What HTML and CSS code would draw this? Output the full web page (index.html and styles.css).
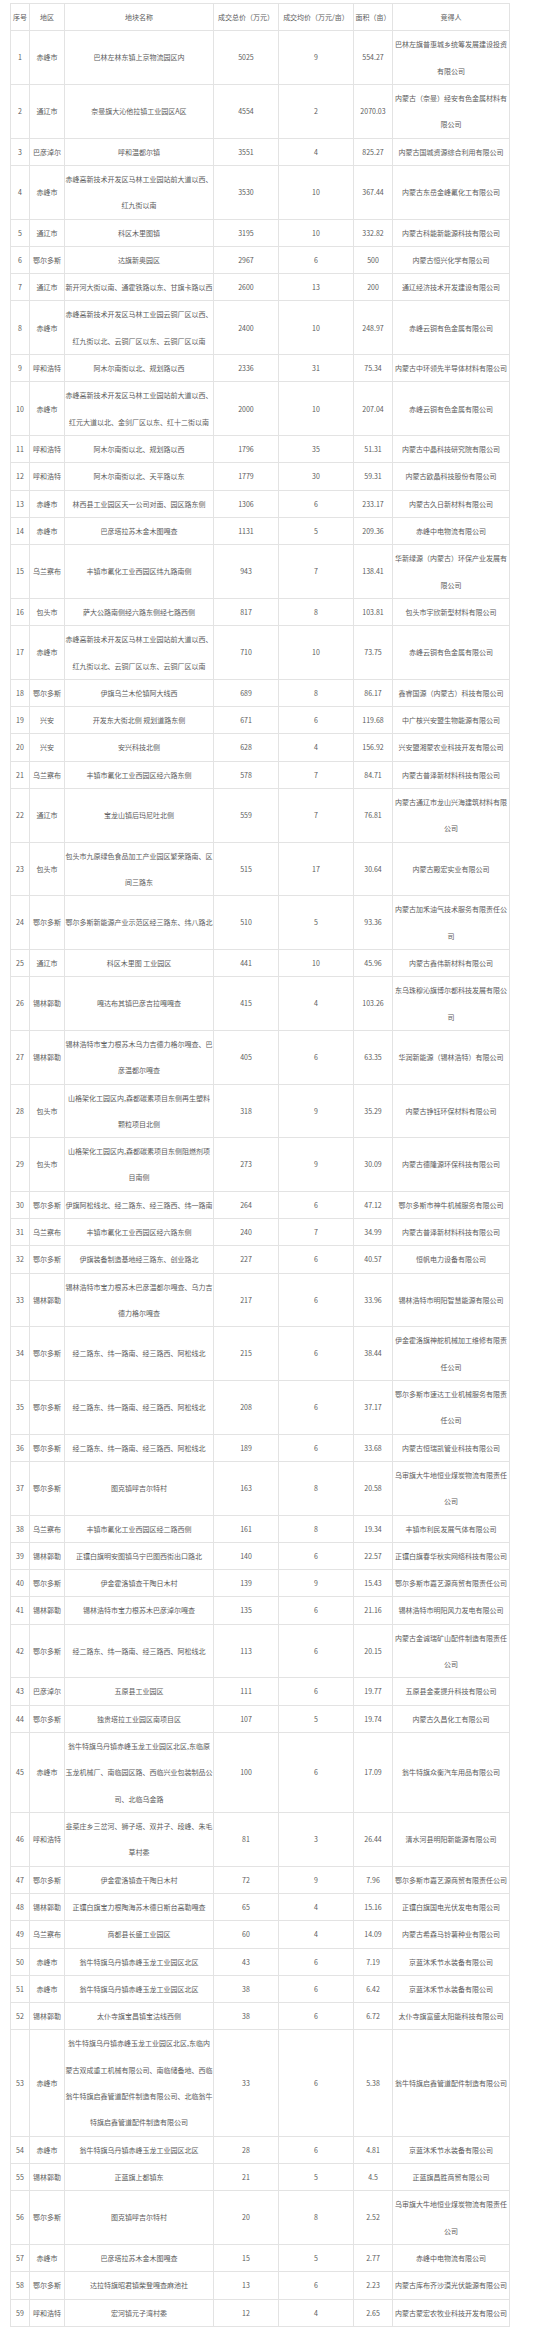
FILE: index.html
```html
<!DOCTYPE html>
<html lang="zh-CN">
<head>
<meta charset="utf-8">
<title>土地成交表</title>
<link rel="stylesheet" href="styles.css">
</head>
<body>
<div class="wrap">
<table class="land">
<colgroup>
<col class="c-no"><col class="c-area"><col class="c-name"><col class="c-total"><col class="c-avg"><col class="c-size"><col class="c-buyer">
</colgroup>
<thead>
<tr><th>序号</th><th>地区</th><th>地块名称</th><th>成交总价（万元）</th><th>成交均价（万元/亩）</th><th>面积（亩）</th><th>竞得人</th></tr>
</thead>
<tbody>
<tr><td>1</td><td>赤峰市</td><td>巴林左林东镇上京物流园区内</td><td>5025</td><td>9</td><td>554.27</td><td>巴林左旗普惠城乡统筹发展建设投资<br>有限公司</td></tr>
<tr><td>2</td><td>通辽市</td><td>奈曼旗大沁他拉镇工业园区A区</td><td>4554</td><td>2</td><td>2070.03</td><td>内蒙古（奈曼）经安有色金属材料有<br>限公司</td></tr>
<tr><td>3</td><td>巴彦淖尔</td><td>呼和温都尔镇</td><td>3551</td><td>4</td><td>825.27</td><td>内蒙古国城资源综合利用有限公司</td></tr>
<tr><td>4</td><td>赤峰市</td><td>赤峰高新技术开发区马林工业园站前大道以西、<br>红九街以南</td><td>3530</td><td>10</td><td>367.44</td><td>内蒙古东岳金峰氟化工有限公司</td></tr>
<tr><td>5</td><td>通辽市</td><td>科区木里图镇</td><td>3195</td><td>10</td><td>332.82</td><td>内蒙古科能新能源科技有限公司</td></tr>
<tr><td>6</td><td>鄂尔多斯</td><td>达旗新奥园区</td><td>2967</td><td>6</td><td>500</td><td>内蒙古恒兴化学有限公司</td></tr>
<tr><td>7</td><td>通辽市</td><td>新开河大街以南、通霍铁路以东、甘旗卡路以西</td><td>2600</td><td>13</td><td>200</td><td>通辽经济技术开发建设有限公司</td></tr>
<tr><td>8</td><td>赤峰市</td><td>赤峰高新技术开发区马林工业园云铜厂区以西、<br>红九街以北、云铜厂区以东、云铜厂区以南</td><td>2400</td><td>10</td><td>248.97</td><td>赤峰云铜有色金属有限公司</td></tr>
<tr><td>9</td><td>呼和浩特</td><td>阿木尔南街以北、规划路以西</td><td>2336</td><td>31</td><td>75.34</td><td>内蒙古中环领先半导体材料有限公司</td></tr>
<tr><td>10</td><td>赤峰市</td><td>赤峰高新技术开发区马林工业园站前大道以西、<br>红元大道以北、金剑厂区以东、红十二街以南</td><td>2000</td><td>10</td><td>207.04</td><td>赤峰云铜有色金属有限公司</td></tr>
<tr><td>11</td><td>呼和浩特</td><td>阿木尔南街以北、规划路以西</td><td>1796</td><td>35</td><td>51.31</td><td>内蒙古中晶科技研究院有限公司</td></tr>
<tr><td>12</td><td>呼和浩特</td><td>阿木尔南街以北、天平路以东</td><td>1779</td><td>30</td><td>59.31</td><td>内蒙古欧晶科技股份有限公司</td></tr>
<tr><td>13</td><td>赤峰市</td><td>林西县工业园区天一公司对面、园区路东侧</td><td>1306</td><td>6</td><td>233.17</td><td>内蒙古久日新材料有限公司</td></tr>
<tr><td>14</td><td>赤峰市</td><td>巴彦塔拉苏木金木图嘎查</td><td>1131</td><td>5</td><td>209.36</td><td>赤峰中电物流有限公司</td></tr>
<tr><td>15</td><td>乌兰察布</td><td>丰镇市氟化工业西园区纬九路南侧</td><td>943</td><td>7</td><td>138.41</td><td>华新绿源（内蒙古）环保产业发展有<br>限公司</td></tr>
<tr><td>16</td><td>包头市</td><td>萨大公路南侧经六路东侧经七路西侧</td><td>817</td><td>8</td><td>103.81</td><td>包头市宇欣新型材料有限公司</td></tr>
<tr><td>17</td><td>赤峰市</td><td>赤峰高新技术开发区马林工业园站前大道以西、<br>红九街以北、云铜厂区以东、云铜厂区以南</td><td>710</td><td>10</td><td>73.75</td><td>赤峰云铜有色金属有限公司</td></tr>
<tr><td>18</td><td>鄂尔多斯</td><td>伊旗乌兰木伦镇阿大线西</td><td>689</td><td>8</td><td>86.17</td><td>鑫睿国源（内蒙古）科技有限公司</td></tr>
<tr><td>19</td><td>兴安</td><td>开发东大街北侧 规划道路东侧</td><td>671</td><td>6</td><td>119.68</td><td>中广核兴安盟生物能源有限公司</td></tr>
<tr><td>20</td><td>兴安</td><td>安兴科技北侧</td><td>628</td><td>4</td><td>156.92</td><td>兴安盟湘蒙农业科技开发有限公司</td></tr>
<tr><td>21</td><td>乌兰察布</td><td>丰镇市氟化工业西园区经六路东侧</td><td>578</td><td>7</td><td>84.71</td><td>内蒙古普泽新材料科技有限公司</td></tr>
<tr><td>22</td><td>通辽市</td><td>宝龙山镇后玛尼吐北侧</td><td>559</td><td>7</td><td>76.81</td><td>内蒙古通辽市龙山兴海建筑材料有限<br>公司</td></tr>
<tr><td>23</td><td>包头市</td><td>包头市九原绿色食品加工产业园区繁荣路南、区<br>间三路东</td><td>515</td><td>17</td><td>30.64</td><td>内蒙古殿宏实业有限公司</td></tr>
<tr><td>24</td><td>鄂尔多斯</td><td>鄂尔多斯新能源产业示范区经三路东、纬八路北</td><td>510</td><td>5</td><td>93.36</td><td>内蒙古加禾油气技术服务有限责任公<br>司</td></tr>
<tr><td>25</td><td>通辽市</td><td>科区木里图 工业园区</td><td>441</td><td>10</td><td>45.96</td><td>内蒙古鑫伟新材料有限公司</td></tr>
<tr><td>26</td><td>锡林郭勒</td><td>嘎达布其镇巴彦吉拉嘎嘎查</td><td>415</td><td>4</td><td>103.26</td><td>东乌珠穆沁旗博尔都科技发展有限公<br>司</td></tr>
<tr><td>27</td><td>锡林郭勒</td><td>锡林浩特市宝力根苏木乌力吉德力格尔嘎查、巴<br>彦温都尔嘎查</td><td>405</td><td>6</td><td>63.35</td><td>华润新能源（锡林浩特）有限公司</td></tr>
<tr><td>28</td><td>包头市</td><td>山格架化工园区内,森都碳素项目东侧再生塑料<br>颗粒项目北侧</td><td>318</td><td>9</td><td>35.29</td><td>内蒙古铮钰环保材料有限公司</td></tr>
<tr><td>29</td><td>包头市</td><td>山格架化工园区内,森都碳素项目东侧阻燃剂项<br>目南侧</td><td>273</td><td>9</td><td>30.09</td><td>内蒙古德隆源环保科技有限公司</td></tr>
<tr><td>30</td><td>鄂尔多斯</td><td>伊旗阿松线北、经二路东、经三路西、纬一路南</td><td>264</td><td>6</td><td>47.12</td><td>鄂尔多斯市神牛机械服务有限公司</td></tr>
<tr><td>31</td><td>乌兰察布</td><td>丰镇市氟化工业西园区经六路东侧</td><td>240</td><td>7</td><td>34.99</td><td>内蒙古普泽新材料科技有限公司</td></tr>
<tr><td>32</td><td>鄂尔多斯</td><td>伊旗装备制造基地经三路东、创业路北</td><td>227</td><td>6</td><td>40.57</td><td>恒帆电力设备有限公司</td></tr>
<tr><td>33</td><td>锡林郭勒</td><td>锡林浩特市宝力根苏木巴彦温都尔嘎查、乌力吉<br>德力格尔嘎查</td><td>217</td><td>6</td><td>33.96</td><td>锡林浩特市明阳智慧能源有限公司</td></tr>
<tr><td>34</td><td>鄂尔多斯</td><td>经二路东、纬一路南、经三路西、阿松线北</td><td>215</td><td>6</td><td>38.44</td><td>伊金霍洛旗神舵机械加工维修有限责<br>任公司</td></tr>
<tr><td>35</td><td>鄂尔多斯</td><td>经二路东、纬一路南、经三路西、阿松线北</td><td>208</td><td>6</td><td>37.17</td><td>鄂尔多斯市速达工业机械服务有限责<br>任公司</td></tr>
<tr><td>36</td><td>鄂尔多斯</td><td>经二路东、纬一路南、经三路西、阿松线北</td><td>189</td><td>6</td><td>33.68</td><td>内蒙古恒瑞凯管业科技有限公司</td></tr>
<tr><td>37</td><td>鄂尔多斯</td><td>图克镇呼吉尔特村</td><td>163</td><td>8</td><td>20.58</td><td>乌审旗大牛地恒业煤炭物流有限责任<br>公司</td></tr>
<tr><td>38</td><td>乌兰察布</td><td>丰镇市氟化工业西园区经二路西侧</td><td>161</td><td>8</td><td>19.34</td><td>丰镇市利民发展气体有限公司</td></tr>
<tr><td>39</td><td>锡林郭勒</td><td>正镶白旗明安图镇乌宁巴图西街出口路北</td><td>140</td><td>6</td><td>22.57</td><td>正镶白旗春华秋实网络科技有限公司</td></tr>
<tr><td>40</td><td>鄂尔多斯</td><td>伊金霍洛镇查干陶日木村</td><td>139</td><td>9</td><td>15.43</td><td>鄂尔多斯市嘉艺源商贸有限责任公司</td></tr>
<tr><td>41</td><td>锡林郭勒</td><td>锡林浩特市宝力根苏木巴彦淖尔嘎查</td><td>135</td><td>6</td><td>21.16</td><td>锡林浩特市明阳风力发电有限公司</td></tr>
<tr><td>42</td><td>鄂尔多斯</td><td>经二路东、纬一路南、经三路西、阿松线北</td><td>113</td><td>6</td><td>20.15</td><td>内蒙古金诚瑞矿山配件制造有限责任<br>公司</td></tr>
<tr><td>43</td><td>巴彦淖尔</td><td>五原县工业园区</td><td>111</td><td>6</td><td>19.77</td><td>五原县金麦提升科技有限公司</td></tr>
<tr><td>44</td><td>鄂尔多斯</td><td>独贵塔拉工业园区南项目区</td><td>107</td><td>5</td><td>19.74</td><td>内蒙古久昌化工有限公司</td></tr>
<tr><td>45</td><td>赤峰市</td><td>翁牛特旗乌丹镇赤峰玉龙工业园区北区,东临原<br>玉龙机械厂、南临园区路、西临兴业包装制品公<br>司、北临乌金路</td><td>100</td><td>6</td><td>17.09</td><td>翁牛特旗众衡汽车用品有限公司</td></tr>
<tr><td>46</td><td>呼和浩特</td><td>韭菜庄乡三岔河、狮子塔、双井子、段峰、朱毛<br>草村委</td><td>81</td><td>3</td><td>26.44</td><td>清水河县明阳新能源有限公司</td></tr>
<tr><td>47</td><td>鄂尔多斯</td><td>伊金霍洛镇查干陶日木村</td><td>72</td><td>9</td><td>7.96</td><td>鄂尔多斯市嘉艺源商贸有限责任公司</td></tr>
<tr><td>48</td><td>锡林郭勒</td><td>正镶白旗宝力根陶海苏木德日斯台高勒嘎查</td><td>65</td><td>4</td><td>15.16</td><td>正镶白旗国电光伏发电有限公司</td></tr>
<tr><td>49</td><td>乌兰察布</td><td>商都县长盛工业园区</td><td>60</td><td>4</td><td>14.09</td><td>内蒙古希森马铃薯种业有限公司</td></tr>
<tr><td>50</td><td>赤峰市</td><td>翁牛特旗乌丹镇赤峰玉龙工业园区北区</td><td>43</td><td>6</td><td>7.19</td><td>京蓝沐禾节水装备有限公司</td></tr>
<tr><td>51</td><td>赤峰市</td><td>翁牛特旗乌丹镇赤峰玉龙工业园区北区</td><td>38</td><td>6</td><td>6.42</td><td>京蓝沐禾节水装备有限公司</td></tr>
<tr><td>52</td><td>锡林郭勒</td><td>太仆寺旗宝昌镇宝沽线西侧</td><td>38</td><td>6</td><td>6.72</td><td>太仆寺旗富盛太阳能科技有限公司</td></tr>
<tr><td>53</td><td>赤峰市</td><td>翁牛特旗乌丹镇赤峰玉龙工业园区北区,东临内<br>蒙古双成重工机械有限公司、南临储备地、西临<br>翁牛特旗启鑫管道配件制造有限公司、北临翁牛<br>特旗启鑫管道配件制造有限公司</td><td>33</td><td>6</td><td>5.38</td><td>翁牛特旗启鑫管道配件制造有限公司</td></tr>
<tr><td>54</td><td>赤峰市</td><td>翁牛特旗乌丹镇赤峰玉龙工业园区北区</td><td>28</td><td>6</td><td>4.81</td><td>京蓝沐禾节水装备有限公司</td></tr>
<tr><td>55</td><td>锡林郭勒</td><td>正蓝旗上都镇东</td><td>21</td><td>5</td><td>4.5</td><td>正蓝旗昌胜商贸有限公司</td></tr>
<tr><td>56</td><td>鄂尔多斯</td><td>图克镇呼吉尔特村</td><td>20</td><td>8</td><td>2.52</td><td>乌审旗大牛地恒业煤炭物流有限责任<br>公司</td></tr>
<tr><td>57</td><td>赤峰市</td><td>巴彦塔拉苏木金木图嘎查</td><td>15</td><td>5</td><td>2.77</td><td>赤峰中电物流有限公司</td></tr>
<tr><td>58</td><td>鄂尔多斯</td><td>达拉特旗昭君镇柴登嘎查麻池社</td><td>13</td><td>6</td><td>2.23</td><td>内蒙古库布齐沙漠光伏能源有限公司</td></tr>
<tr><td>59</td><td>呼和浩特</td><td>宏河镇元子湾村委</td><td>12</td><td>4</td><td>2.65</td><td>内蒙古蒙宏农牧业科技开发有限公司</td></tr>
</tbody>
</table>
</div>
</body>
</html>
```

FILE: styles.css
```css
html, body {
  margin: 0;
  padding: 0;
  background: #ffffff;
}

.wrap {
  padding: 3px 0 0 10px;
}

.land {
  width: 499px;
  table-layout: fixed;
  border-collapse: collapse;
  font-family: "Noto Sans CJK SC", "Noto Sans", sans-serif;
  font-size: 7px;
  line-height: 26.32px;
  color: #5c5c5c;
}

.c-no { width: 19px; }
.c-area { width: 35px; }
.c-name { width: 149px; }
.c-total { width: 65px; }
.c-avg { width: 75px; }
.c-size { width: 39px; }
.c-buyer { width: 117px; }

.land th,
.land td {
  border: 1px solid #e3e3e3;
  padding: 0;
  text-align: center;
  vertical-align: middle;
  white-space: nowrap;
  font-weight: normal;
}
```
